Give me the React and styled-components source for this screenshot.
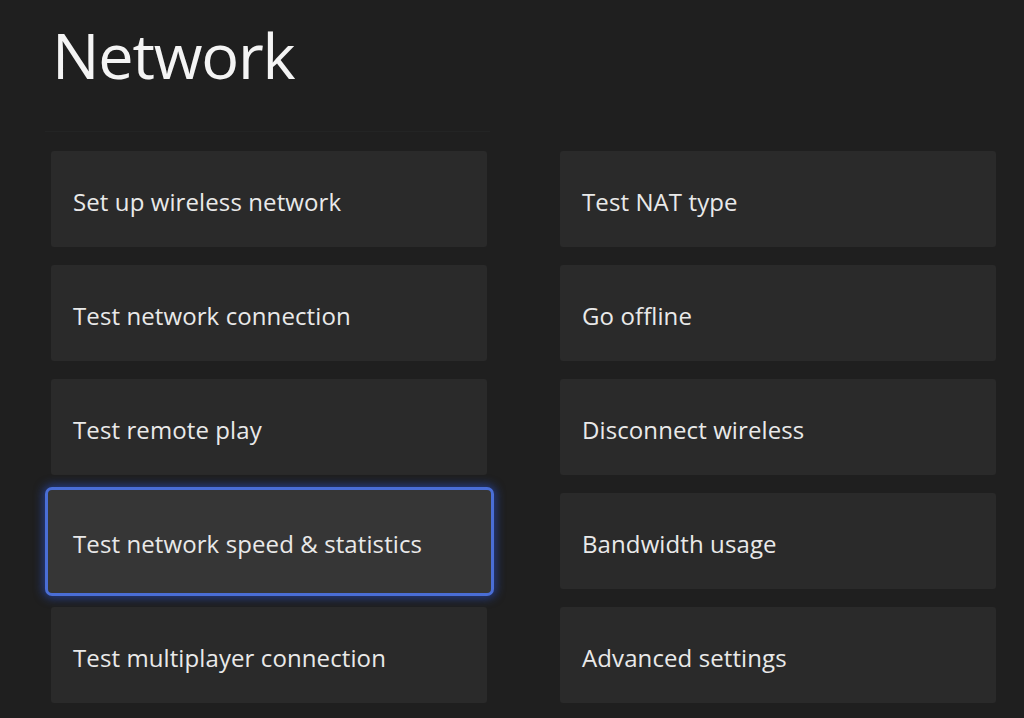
import React from "react";
import styled, { createGlobalStyle } from "styled-components";

const GlobalStyle = createGlobalStyle`
  html, body {
    margin: 0;
    padding: 0;
    background-color: #1f1f1f;
  }
  body {
    font-family: "Open Sans", "Noto Sans", sans-serif;
    overflow: hidden;
  }
`;

const Page = styled.div`
  width: 1024px;
  height: 718px;
  box-sizing: border-box;
  padding: 0 28px 0 51px;
  background-color: #1f1f1f;
  overflow: hidden;
`;

const Title = styled.h1`
  margin: 0;
  padding: 11px 0 0 1px;
  font-weight: 400;
  font-size: 63px;
  line-height: 87px;
  color: #f4f4f4;
  letter-spacing: -1.2px;
`;

const Divider = styled.div`
  width: 445px;
  height: 1px;
  margin: 33px 0 19px -6px;
  background-color: #232424;
`;

const Grid = styled.div`
  display: grid;
  grid-template-columns: 436px 436px;
  grid-auto-rows: 96px;
  column-gap: 73px;
  row-gap: 18px;
`;

const Tile = styled.div`
  display: flex;
  align-items: center;
  box-sizing: border-box;
  padding: 4px 0 0 22px;
  border-radius: 3px;
  background-color: #2a2a2a;
  color: #e9e9e9;
  font-size: 24px;
  letter-spacing: 0.1px;
  cursor: pointer;

  ${(p) =>
    p.$focused &&
    `
    margin: -6px -7px -7px -6px;
    padding-left: 25px;
    border: 3px solid #4a6ed6;
    border-radius: 7px;
    background-color: #363636;
    box-shadow: 0 0 10px 2px rgba(40, 80, 205, 0.6);
  `}
`;

const items = [
  "Set up wireless network",
  "Test NAT type",
  "Test network connection",
  "Go offline",
  "Test remote play",
  "Disconnect wireless",
  "Test network speed & statistics",
  "Bandwidth usage",
  "Test multiplayer connection",
  "Advanced settings",
];

const App = () => {
  return (
    <>
      <GlobalStyle />
      <Page>
        <Title>Network</Title>
        <Divider />
        <Grid>
          {items.map((label) => (
            <Tile
              key={label}
              $focused={label === "Test network speed & statistics"}
            >
              {label}
            </Tile>
          ))}
        </Grid>
      </Page>
    </>
  );
};

export default App;
